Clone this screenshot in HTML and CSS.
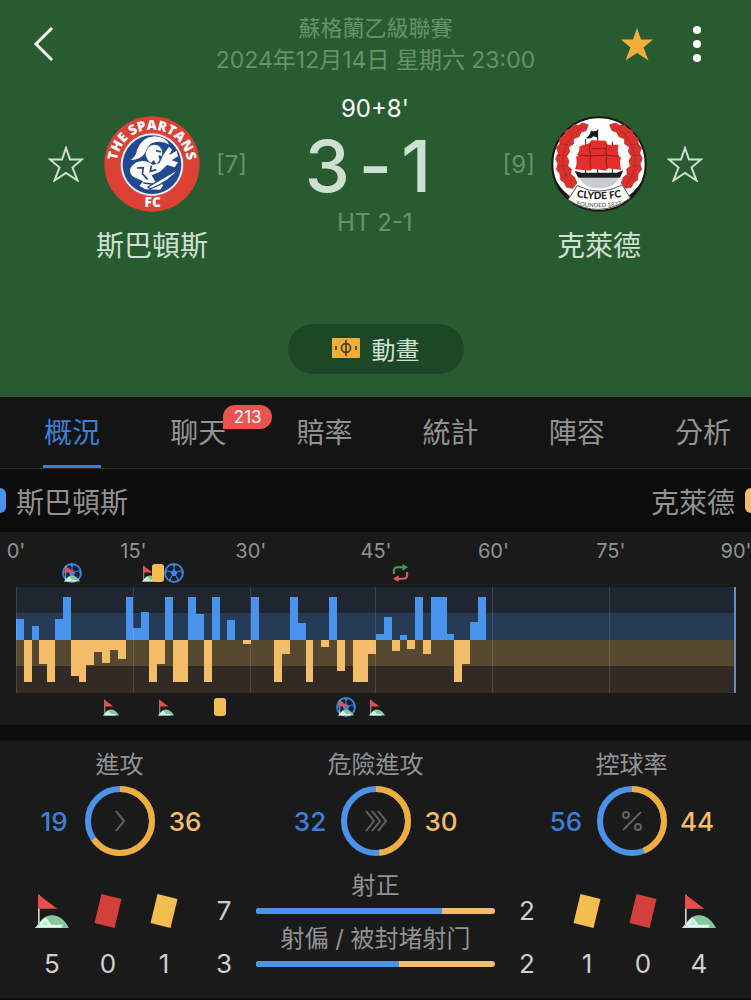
FILE: index.html
```html
<!DOCTYPE html>
<html lang="zh-Hant">
<head>
<meta charset="UTF-8">
<meta name="viewport" content="width=device-width, initial-scale=1.0">
<title>斯巴頓斯 3-1 克萊德</title>
<link rel="stylesheet" href="styles.css">
</head>
<body>

<!-- Shared icons -->
<svg class="sprite" aria-hidden="true">
    <symbol id="star" viewBox="0 0 36 36">
        <path d="M18 2 L22 13.5 H34 L24.500 21.500 L29.500 34.500 L18 27 L6.500 34.500 L11.500 21.500 L2 13.500 H14 Z"/>
    </symbol>
    <symbol id="corner" viewBox="0 0 102 102">
        <path d="M0 102 L14 84 Q28 66 46 64 Q66 62 82 76 Q94 86 102 102 Z" fill="#84c8a1"/>
        <path d="M0 102 L32 70 L50 92 H84 L80 102 Z" fill="#b9ecd0"/>
        <path d="M10 97 L31 74 L45 92 M18 96 H80" stroke="#f2fff7" stroke-width="5" fill="none"/>
        <path d="M9 2 H14 V96 H9 Z" fill="#d5cfcf"/>
        <path d="M9 1 L67 44 H9 Z" fill="#e5504b"/>
    </symbol>
    <symbol id="card" viewBox="0 0 28 36">
        <path d="M7.500 1 L27.500 6 L20.500 35 L.5 30 Z" fill="currentColor"/>
    </symbol>
    <symbol id="booking" viewBox="0 0 12 18">
        <rect width="12" height="18" rx="3" fill="#f3bd4f"/>
    </symbol>
    <symbol id="goal" viewBox="0 0 20 20">
        <circle cx="10" cy="10" r="9" fill="#16202e" stroke="#3d82e0" stroke-width="1.800"/>
        <path d="M10 6.500 L13.300 9 L12 13 H8 L6.700 9 Z" fill="#3d82e0"/>
        <path d="M10 7 V2.500 M13 9 L17.500 7.500 M12 13 L14.500 17 M8 13 L5.500 17 M7 9 L2.500 7.500" stroke="#3d82e0" stroke-width="1.200"/>
        <path d="M7 1.500 L10 3.500 L13 1.500 Z M18 6 L17 9.500 L19 12 Z M2 6 L3 9.500 L1 12 Z M16.500 16 L13.500 16 L12.500 19 Z M3.500 16 L6.500 16 L7.500 19 Z" fill="#3d82e0"/>
    </symbol>
    <symbol id="sub" viewBox="0 0 18 20">
        <path d="M2 11 V8 Q2 4 6 4 H12" fill="none" stroke="#3f9e62" stroke-width="2.200"/>
        <path d="M11 .5 L17 4 L11 7.500 Z" fill="#3f9e62"/>
        <path d="M16 9 V12 Q16 16 12 16 H6" fill="none" stroke="#e0566b" stroke-width="2.200"/>
        <path d="M7 12.500 L1 16 L7 19.500 Z" fill="#e0566b"/>
    </symbol>
</svg>

<header class="match-header">
    <div class="top-bar">
        <button class="icon-btn back" aria-label="返回">
            <svg width="24" height="36" viewBox="0 0 24 36"><path d="M20 2 L4 18 L20 34" fill="none" stroke="#fff" stroke-width="3"/></svg>
        </button>
        <div class="match-info">
            <div>蘇格蘭乙級聯賽</div>
            <div class="date">2024年12月14日 星期六 23:00</div>
        </div>
        <div class="actions">
            <button class="icon-btn favourite" aria-label="收藏"><svg width="36" height="36"><use href="#star"/></svg></button>
            <button class="icon-btn" aria-label="更多">
                <svg width="12" height="36" viewBox="0 0 12 36" fill="#fff"><circle cx="6" cy="4" r="4"/><circle cx="6" cy="18" r="4"/><circle cx="6" cy="32" r="4"/></svg>
            </button>
        </div>
    </div>

    <div class="scoreboard">
        <div class="team">
            <button class="icon-btn outline" aria-label="收藏斯巴頓斯"><svg width="36" height="36"><use href="#star"/></svg></button>
            <div class="club">
                <svg width="96" height="96" viewBox="27 33 288 288">
                    <defs>
                        <path id="spartansTop" d="M71 215 A106 106 0 1 1 271 215"/>
                    </defs>
                    <circle cx="171" cy="177" r="143" fill="#dd4034"/>
                    <circle cx="171" cy="179" r="94" fill="#e6edf8"/>
                    <circle cx="171" cy="179" r="88" fill="#20498f"/>
                    <path d="M107 165 Q124 153 126 135 Q138 98 178 94 Q212 95 223 119 Q205 107 183 111 Q158 114 151 143 Q137 164 107 165 Z" fill="#fff"/>
                    <path d="M152 151 Q153 122 177 119 Q199 119 202 142 L200 154 L190 150 L194 166 L184 177 L176 165 L168 174 Q158 169 152 151 Z" fill="#fff"/>
                    <path d="M108 187 Q126 161 158 170 L175 180 L194 174 L205 149 L222 125 L231 134 L222 151 L245 137 L249 154 L230 166 L249 172 L239 187 L216 180 L195 200 L170 211 L180 229 L205 240 L196 254 L151 253 L133 242 L145 229 L116 216 Q98 202 108 187 Z" fill="#fff"/>
                    <path d="M126 189 L145 188 L142 206 L158 223 M169 182 L166 199 L184 194 M145 234 L178 238 M183 137 L198 141" fill="none" stroke="#20498f" stroke-width="5"/>
                    <path d="M159 246 Q205 218 253 191 Q224 229 166 252 Z" fill="#fff" stroke="#20498f" stroke-width="4"/>
                    <text class="crest-spartans"><textPath href="#spartansTop" startOffset="50%" text-anchor="middle">THE SPARTANS</textPath></text>
                    <text class="crest-spartans" x="173" y="307" text-anchor="middle">FC</text>
                </svg>
                <span class="club-name">斯巴頓斯</span>
            </div>
            <span class="rank">[7]</span>
        </div>

        <div class="score-box">
            <div class="clock">90+8'</div>
            <div class="score"><span>3</span><span>-</span><span>1</span></div>
            <div class="half-time">HT 2-1</div>
        </div>

        <div class="team">
            <span class="rank">[9]</span>
            <div class="club">
                <svg width="96" height="96" viewBox="33 33 288 288">
                    <defs>
                        <path id="clydeName" d="M104 275 Q177 290 250 275"/>
                        <path id="clydeYear" d="M88 298 Q177 316 266 298"/>
                    </defs>
                    <circle cx="177" cy="177" r="140" fill="#fff" stroke="#171717" stroke-width="6"/>
                    <path d="M38 210 Q48 256 84 283 L90 274 Q58 250 38 210 Z M316 210 Q306 256 270 283 L264 274 Q296 250 316 210 Z" fill="#171717"/>
                    <path id="wreath" d="M145 59 L128 54 L116 61 L100 59 L91 72 L76 76 L73 92 L58 99 L60 116 L49 128 L55 145 L47 161 L54 177 L49 193 L60 207 L61 224 L73 233 L80 247 L98 250 L111 234 L103 216 L92 208 L94 192 L83 183 L87 168 L80 154 L89 140 L86 126 L100 117 L101 101 L117 95 L124 81 L138 77 Z" fill="#dc312b" stroke="#a82a27" stroke-width="2"/>
                    <use href="#wreath" transform="matrix(-1 0 0 1 354 0)"/>
                    <path d="M127 68 L99 87 L81 117 L69 151 L68 184 L79 216 L96 241 M58 117 L84 120 M51 151 L78 151 M55 185 L80 181 M66 217 L91 205 M88 77 L101 94 M227 68 L255 87 L273 117 L285 151 L286 184 L275 216 L258 241 M296 117 L270 120 M303 151 L276 151 M299 185 L274 181 M288 217 L263 205 M266 77 L253 94" fill="none" stroke="#b52a27" stroke-width="3"/>
                    <path d="M119 219 H237 Q222 250 177 250 Q133 250 119 219 Z" fill="#cbcbcf"/>
                    <path d="M104 198 L125 203 H230 L250 196 L240 218 H115 Z" fill="#1c1c1c"/>
                    <path d="M173 74 V205 M137 102 V205 M217 110 V205" stroke="#222" stroke-width="3"/>
                    <path d="M174 75 Q162 81 153 77 Q149 93 137 99 Q153 104 160 94 L174 98 Z" fill="#1c1c1c"/>
                    <path d="M118 124 L148 115 L154 106 L197 107 L203 119 L236 119 Q231 137 237 154 L243 156 Q237 178 244 195 L203 190 L198 197 L158 191 L151 197 L105 193 Q113 174 108 155 L119 151 L110 150 Q121 137 118 124 Z" fill="#e22f2b"/>
                    <path d="M116 151 L152 153 L197 151 L237 154 M151 116 Q145 134 152 153 Q147 175 152 191 M200 118 Q195 135 200 154 Q196 177 202 191 M155 131 H198" fill="none" stroke="#851e1c" stroke-width="3"/>
                    <path d="M112 242 Q177 276 247 240 L271 279 Q177 345 84 284 Z" fill="#fff" stroke="#5a5a5a" stroke-width="3"/>
                    <text class="crest-clyde"><textPath href="#clydeName" startOffset="50%" text-anchor="middle">CLYDE FC</textPath></text>
                    <text class="crest-year"><textPath href="#clydeYear" startOffset="50%" text-anchor="middle">FOUNDED 1877</textPath></text>
                </svg>
                <span class="club-name">克萊德</span>
            </div>
            <button class="icon-btn outline" aria-label="收藏克萊德"><svg width="36" height="36"><use href="#star"/></svg></button>
        </div>
    </div>

    <button class="animation-btn">
        <svg width="28" height="20" viewBox="0 0 28 20">
            <rect width="28" height="20" rx="1" fill="#f3ad3a"/>
            <circle cx="14" cy="10" r="4.500" fill="none" stroke="#4c4a17" stroke-width="1.800"/>
            <path d="M14 2 V18 M4 8 V12 M24 8 V12" stroke="#4c4a17" stroke-width="1.800"/>
        </svg>
        動畫
    </button>
</header>

<nav class="tabs">
    <a href="#" class="active">概況</a>
    <a href="#">聊天<span class="badge">213</span></a>
    <a href="#">賠率</a>
    <a href="#">統計</a>
    <a href="#">陣容</a>
    <a href="#">分析</a>
</nav>

<div class="legend">
    <span class="marker home"></span>
    <span>斯巴頓斯</span>
    <span class="away-name">克萊德</span>
    <span class="marker away"></span>
</div>

<section class="panel timeline">
    <div class="slots ticks" id="ticks"></div>
    <div class="slots events" id="homeEvents"></div>
    <div class="chart">
        <div class="half home" id="homeBars"></div>
        <div class="half away" id="awayBars"></div>
        <div class="slots grid-lines" id="gridLines"></div>
    </div>
    <div class="slots events" id="awayEvents"></div>
</section>

<section class="panel stats">
    <div class="rings">
        <div class="ring-stat">
            <div class="label">進攻</div>
            <div class="ring-row">
                <span class="home-value">19</span>
                <svg class="ring" viewBox="0 0 70 70">
                    <circle class="ring-home" cx="35" cy="35" r="32"/>
                    <circle class="ring-away" cx="35" cy="35" r="32" pathLength="55" stroke-dasharray="36 55"/>
                    <path class="ring-icon" d="M31 25 L39 35 L31 45"/>
                </svg>
                <span class="away-value">36</span>
            </div>
        </div>
        <div class="ring-stat">
            <div class="label">危險進攻</div>
            <div class="ring-row">
                <span class="home-value">32</span>
                <svg class="ring" viewBox="0 0 70 70">
                    <circle class="ring-home" cx="35" cy="35" r="32"/>
                    <circle class="ring-away" cx="35" cy="35" r="32" pathLength="62" stroke-dasharray="30 62"/>
                    <path class="ring-icon" d="M25 25 L33 35 L25 45 M31 25 L39 35 L31 45 M37 25 L45 35 L37 45"/>
                </svg>
                <span class="away-value">30</span>
            </div>
        </div>
        <div class="ring-stat">
            <div class="label">控球率</div>
            <div class="ring-row">
                <span class="home-value">56</span>
                <svg class="ring" viewBox="0 0 70 70">
                    <circle class="ring-home" cx="35" cy="35" r="32"/>
                    <circle class="ring-away" cx="35" cy="35" r="32" pathLength="100" stroke-dasharray="44 100"/>
                    <path class="ring-icon" d="M44 26 L26 44"/>
                    <circle class="ring-icon" cx="29" cy="29" r="3"/>
                    <circle class="ring-icon" cx="41" cy="41" r="3"/>
                </svg>
                <span class="away-value">44</span>
            </div>
        </div>
    </div>

    <div class="details">
        <div class="counts">
            <div class="count"><svg width="34" height="34"><use href="#corner"/></svg>5</div>
            <div class="count red"><svg width="28" height="36"><use href="#card"/></svg>0</div>
            <div class="count yellow"><svg width="28" height="36"><use href="#card"/></svg>1</div>
        </div>
        <div class="shots">
            <div class="shot-row">
                <span class="number">7</span>
                <div class="shot-bar">
                    <span class="label">射正</span>
                    <div class="bar"><div style="width: 78%"></div></div>
                </div>
                <span class="number">2</span>
            </div>
            <div class="shot-row">
                <span class="number">3</span>
                <div class="shot-bar">
                    <span class="label">射偏 / 被封堵射门</span>
                    <div class="bar"><div style="width: 60%"></div></div>
                </div>
                <span class="number">2</span>
            </div>
        </div>
        <div class="counts">
            <div class="count yellow"><svg width="28" height="36"><use href="#card"/></svg>1</div>
            <div class="count red"><svg width="28" height="36"><use href="#card"/></svg>0</div>
            <div class="count"><svg width="34" height="34"><use href="#corner"/></svg>4</div>
        </div>
    </div>
</section>

<script>
    // One slot per minute, with one added in each half
    const SLOTS = 92;

    const ticks = [[0, "0'"], [15, "15'"], [30, "30'"], [46, "45'"], [61, "60'"], [76, "75'"], [92, "90'"]];

    // Attack strength in percent, by slot
    const homeBars = {
        0: 40, 2: 26, 5: 40, 6: 81, 14: 81, 15: 22, 16: 53, 19: 81, 22: 81, 23: 49,
        25: 81, 27: 38, 30: 81, 35: 81, 36: 32, 40: 81, 46: 11, 47: 43, 49: 9,
        51: 81, 53: 81, 54: 81, 55: 11, 58: 34, 59: 81
    };
    const awayBars = {
        1: 80, 3: 45, 4: 80, 7: 68, 8: 80, 9: 47, 10: 22, 11: 43, 12: 19, 13: 36,
        17: 80, 18: 45, 20: 80, 21: 80, 24: 80, 29: 7, 33: 80, 34: 26, 37: 80,
        39: 13, 41: 58, 43: 80, 44: 80, 45: 26, 48: 21, 50: 17, 52: 26, 56: 80, 57: 45
    };

    const homeEvents = [[7, 'goal'], [7, 'corner'], [17, 'corner'], [18, 'booking'], [20, 'goal'], [49, 'sub']];
    const awayEvents = [[12, 'corner'], [19, 'corner'], [26, 'booking'], [42, 'goal'], [42, 'corner'], [46, 'corner']];

    function drawBars(id, bars) {
        let html = '';
        for (let i = 0; i < SLOTS; i++) {
            html += `<div style="height: ${bars[i] || 0}%"></div>`;
        }
        document.getElementById(id).innerHTML = html;
    }

    function drawEvents(id, events) {
        document.getElementById(id).innerHTML = events.map(([slot, type]) =>
            `<span style="grid-column: ${slot + 1}"><svg class="event-${type}"><use href="#${type}"/></svg></span>`
        ).join('');
    }

    document.getElementById('ticks').innerHTML = ticks.map(([slot, text]) =>
        `<span style="grid-column: ${slot + 1}">${text}</span>`
    ).join('');
    document.getElementById('gridLines').innerHTML = ticks.map(([slot]) =>
        `<i style="grid-column: ${slot + 1}"></i>`
    ).join('');

    drawBars('homeBars', homeBars);
    drawBars('awayBars', awayBars);
    drawEvents('homeEvents', homeEvents);
    drawEvents('awayEvents', awayEvents);
</script>

</body>
</html>
```
FILE: styles.css
```css
* {
    box-sizing: border-box;
}
body {
    margin: 0;
    background-color: #0c0c0c;
    color: #929292;
    font-family: Inter, "Noto Sans CJK TC", sans-serif;
    font-size: 24px;
    overflow-x: hidden;
}
button {
    font: inherit;
    color: inherit;
    border: none;
    cursor: pointer;
}
svg {
    display: block;
    flex-shrink: 0;
}
.sprite {
    position: absolute;
    width: 0;
    height: 0;
}

/* Header */
.match-header {
    background-color: #285c30;
    padding: 12px 0 23px;
    color: #cfe0d2;
}
.top-bar {
    display: grid;
    grid-template-columns: 1fr auto 1fr;
    align-items: center;
    padding: 0 48px 0 32px;
}
.icon-btn {
    display: flex;
    padding: 0;
    background: none;
}
.match-info {
    text-align: center;
    font-size: 22px;
    line-height: 32px;
    color: #66926d;
    padding-left: 16px;
}
.date {
    font-size: 23px;
}
.actions {
    display: flex;
    justify-content: flex-end;
    gap: 36px;
}
.favourite {
    fill: #f3ad3a;
}
.outline {
    fill: none;
    stroke: #cfe0d2;
    stroke-width: 2px;
}
.scoreboard {
    display: flex;
    justify-content: space-between;
    padding: 17px 48px 0;
}
.team {
    display: flex;
    padding-top: 23px;
}
.team .icon-btn, .rank {
    height: 96px;
    display: flex;
    align-items: center;
}
.rank {
    color: #66926d;
}
.club {
    width: 96px;
    margin: 0 16px 0 20px;
    display: flex;
    flex-direction: column;
    align-items: center;
}
.team:last-child .club {
    margin: 0 20px 0 16px;
}
.club-name {
    margin-top: 16px;
    font-size: 28px;
    line-height: 36px;
    white-space: nowrap;
}
.crest-spartans {
    font: 800 41px "Open Sans", sans-serif;
    fill: #fff;
}
.crest-clyde {
    font: 900 30px Lato, sans-serif;
    fill: #222;
}
.crest-year {
    font: bold 18px Lato, sans-serif;
    fill: #777;
}
.score-box {
    text-align: center;
    line-height: 32px;
}
.clock {
    color: #fff;
}
.score {
    display: flex;
    justify-content: center;
    gap: 9px;
    padding-right: 14px;
    font-size: 72px;
    font-weight: 500;
    line-height: 82px;
}
.half-time {
    color: #66926d;
}
.animation-btn {
    display: flex;
    align-items: center;
    justify-content: center;
    gap: 12px;
    width: 176px;
    height: 50px;
    margin: 60px auto 0;
    padding: 0 0 2px;
    border-radius: 25px;
    background-color: #1d4825;
}

/* Tabs */
.tabs {
    display: flex;
    justify-content: space-between;
    height: 72px;
    padding: 0 19px 0 43px;
    background-color: #141414;
    border-bottom: 1px solid #2a2a2a;
    font-size: 28px;
    line-height: 72px;
}
.tabs a {
    position: relative;
    padding: 0 1px;
    color: #929292;
    text-decoration: none;
    white-space: nowrap;
}
.tabs .active {
    color: #3e7fd6;
    border-bottom: 3px solid #3e7fd6;
}
.badge {
    position: absolute;
    left: 54px;
    top: 8px;
    width: 49px;
    border-radius: 12px 12px 12px 0;
    background-color: #ee524f;
    color: #fff;
    font-size: 17px;
    line-height: 24px;
    text-align: center;
}

/* Team legend */
.legend {
    display: flex;
    align-items: center;
    gap: 10px;
    height: 63px;
    font-size: 28px;
}
.marker {
    width: 6px;
    height: 25px;
}
.marker.home {
    background-color: #4a93ec;
    border-radius: 0 6px 6px 0;
}
.marker.away {
    background-color: #f3bd6a;
    border-radius: 6px 0 0 6px;
}
.away-name {
    margin-left: auto;
}

/* Attack timeline */
.panel {
    background-color: #1a1a1a;
}
.timeline {
    padding: 7px 15px 8px 16px;
    margin-bottom: 16px;
}
.slots {
    display: grid;
    grid-template-columns: repeat(92, minmax(0, 1fr));
}
.slots > * {
    grid-row: 1;
    width: 0;
    display: flex;
    justify-content: center;
}
.ticks {
    font-size: 20px;
    line-height: 24px;
}
.events {
    height: 20px;
    align-items: center;
    margin: 0 -1px 0 1px;
}
.chart {
    position: relative;
    margin: 4px 0;
}
.half {
    display: flex;
    height: 53px;
}
.half div {
    flex: 1;
}
.event-goal {
    width: 20px;
    height: 20px;
}
.event-corner {
    width: 16px;
    height: 17px;
}
.event-booking {
    width: 12px;
    height: 18px;
}
.event-sub {
    width: 17px;
    height: 20px;
}
.half.home {
    align-items: flex-end;
    background: linear-gradient(#1f262f 50%, #263c56 50%);
}
.half.away {
    background: linear-gradient(#574830 50%, #322a25 50%);
}
.half.home div {
    background-color: #4a93ec;
}
.half.away div {
    background-color: #f3bd6a;
}
.grid-lines {
    position: absolute;
    inset: 0;
}
.grid-lines i {
    border-left: 1px solid rgba(255, 255, 255, 0.12);
}
.grid-lines i:last-child {
    border-left: 2px solid #5c8fcb;
}

/* Stats */
.stats {
    padding: 9px 0 21px;
}
.label {
    line-height: 30px;
    white-space: nowrap;
}
.rings {
    display: flex;
    justify-content: space-between;
    padding: 0 36px;
}
.ring-stat {
    width: 167px;
    text-align: center;
}
.ring-row {
    display: flex;
    align-items: center;
    justify-content: space-between;
    margin-top: 6px;
    font-size: 26px;
    font-weight: 500;
}
.ring-row span {
    width: 36px;
}
.home-value {
    color: #3e7fd6;
}
.away-value {
    color: #f3bd6a;
}
.ring {
    width: 70px;
    height: 70px;
    fill: none;
    stroke-width: 6px;
}
.ring-home {
    stroke: #4a93ec;
}
.ring-away {
    stroke: #f0ae3d;
    transform: rotate(-90deg);
    transform-origin: center;
}
.ring-icon {
    stroke: #626262;
    stroke-width: 2px;
}
.details {
    display: flex;
    align-items: flex-end;
    margin-top: 15px;
    padding: 0 24px;
}
.counts {
    display: flex;
}
.count {
    width: 56px;
    display: flex;
    flex-direction: column;
    align-items: center;
    gap: 22px;
    color: #cfcfcf;
    font-size: 26px;
    line-height: 26px;
}
.count svg {
    height: 36px;
}
.red svg {
    color: #d3403b;
}
.yellow svg {
    color: #f3bd4f;
}
.shots {
    flex: 1;
}
.shot-row {
    display: grid;
    grid-template-columns: 64px 1fr 64px;
    align-items: end;
    text-align: center;
}
.number {
    color: #cfcfcf;
    font-size: 26px;
    line-height: 26px;
}
.shot-bar {
    padding-bottom: 10px;
}
.shot-bar .label {
    display: block;
}
.bar {
    height: 6px;
    margin-top: 7px;
    border-radius: 3px;
    background-color: #f3bd6a;
    overflow: hidden;
}
.bar div {
    height: 6px;
    background-color: #4a93ec;
}
```
